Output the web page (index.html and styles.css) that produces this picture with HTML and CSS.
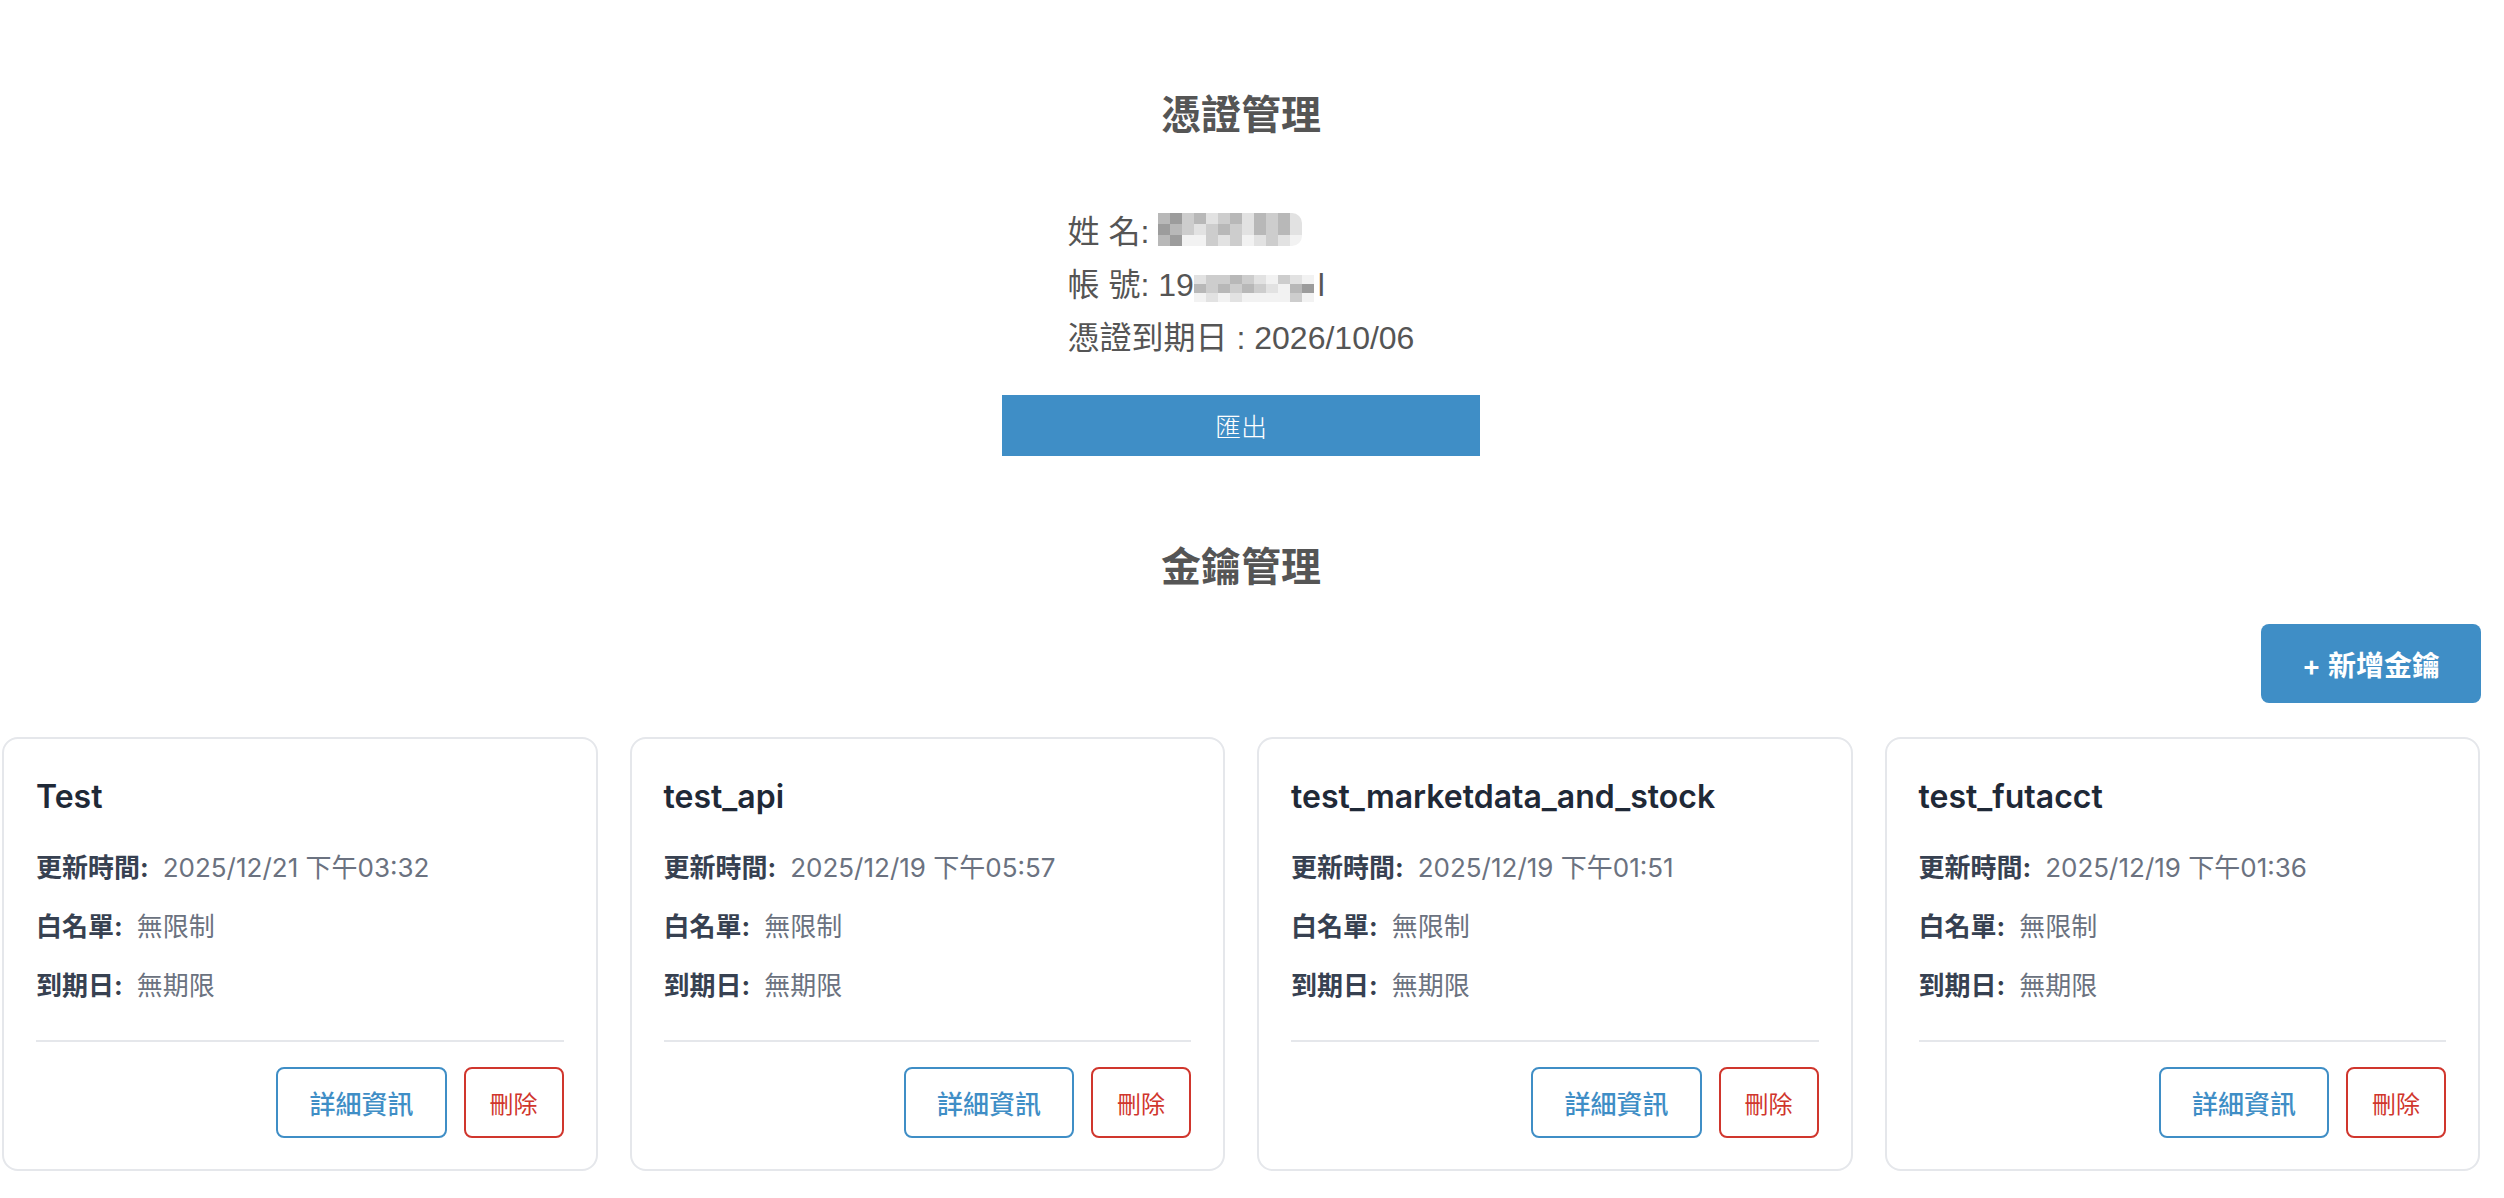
FILE: index.html
```html
<!DOCTYPE html>
<html lang="zh-Hant">
<head>
<meta charset="utf-8">
<title>憑證管理</title>
<link rel="stylesheet" href="styles.css">
</head>
<body>
<div class="page">
  <section class="cert">
    <h2 class="section-title cert-title">憑證管理</h2>
    <div class="info">
      <div class="info-line"><span>姓 名: </span><span class="mosaic name-mosaic"><i class="c2"></i><i class="c1"></i><i class="c3"></i><i class="c2"></i><i class="c4"></i><i class="c3"></i><i class="c2"></i><i class="c4"></i><i class="c2"></i><i class="c3"></i><i class="c2"></i><i class="c4"></i><i class="c1"></i><i class="c2"></i><i class="c3"></i><i class="c4"></i><i class="c3"></i><i class="c2"></i><i class="c3"></i><i class="c4"></i><i class="c2"></i><i class="c3"></i><i class="c2"></i><i class="c4"></i><i class="c2"></i><i class="c1"></i><i class="c5"></i><i class="c5"></i><i class="c3"></i><i class="c4"></i><i class="c3"></i><i class="c5"></i><i class="c4"></i><i class="c3"></i><i class="c4"></i><i class="c5"></i></span></div>
      <div class="info-line"><span>帳 號: 19</span><span class="mosaic acct-mosaic"><i class="c4"></i><i class="c3"></i><i class="c3"></i><i class="c2"></i><i class="c3"></i><i class="c4"></i><i class="c5"></i><i class="c3"></i><i class="c4"></i><i class="c5"></i><i class="c2"></i><i class="c3"></i><i class="c2"></i><i class="c3"></i><i class="c2"></i><i class="c3"></i><i class="c4"></i><i class="c5"></i><i class="c2"></i><i class="c1"></i><i class="c5"></i><i class="c4"></i><i class="c5"></i><i class="c4"></i><i class="c5"></i><i class="c5"></i><i class="c5"></i><i class="c5"></i><i class="c3"></i><i class="c5"></i></span><span>l</span></div>
      <div class="info-line"><span>憑證到期日 : 2026/10/06</span></div>
    </div>
    <button class="export-btn">匯出</button>
  </section>

  <section class="keys">
    <h2 class="section-title keys-title">金鑰管理</h2>
    <div class="toolbar">
      <button class="add-btn">+ 新增金鑰</button>
    </div>
    <div class="card-grid">
      <div class="card">
        <div class="card-title">Test</div>
        <div class="row"><span class="label">更新時間:</span><span class="value">2025/12/21 下午03:32</span></div>
        <div class="row"><span class="label">白名單:</span><span class="value">無限制</span></div>
        <div class="row"><span class="label">到期日:</span><span class="value">無期限</span></div>
        <div class="card-actions">
          <button class="btn-detail">詳細資訊</button>
          <button class="btn-delete">刪除</button>
        </div>
      </div>
      <div class="card">
        <div class="card-title">test_api</div>
        <div class="row"><span class="label">更新時間:</span><span class="value">2025/12/19 下午05:57</span></div>
        <div class="row"><span class="label">白名單:</span><span class="value">無限制</span></div>
        <div class="row"><span class="label">到期日:</span><span class="value">無期限</span></div>
        <div class="card-actions">
          <button class="btn-detail">詳細資訊</button>
          <button class="btn-delete">刪除</button>
        </div>
      </div>
      <div class="card">
        <div class="card-title">test_marketdata_and_stock</div>
        <div class="row"><span class="label">更新時間:</span><span class="value">2025/12/19 下午01:51</span></div>
        <div class="row"><span class="label">白名單:</span><span class="value">無限制</span></div>
        <div class="row"><span class="label">到期日:</span><span class="value">無期限</span></div>
        <div class="card-actions">
          <button class="btn-detail">詳細資訊</button>
          <button class="btn-delete">刪除</button>
        </div>
      </div>
      <div class="card">
        <div class="card-title">test_futacct</div>
        <div class="row"><span class="label">更新時間:</span><span class="value">2025/12/19 下午01:36</span></div>
        <div class="row"><span class="label">白名單:</span><span class="value">無限制</span></div>
        <div class="row"><span class="label">到期日:</span><span class="value">無期限</span></div>
        <div class="card-actions">
          <button class="btn-detail">詳細資訊</button>
          <button class="btn-delete">刪除</button>
        </div>
      </div>
    </div>
  </section>
</div>
</body>
</html>
```

FILE: styles.css
```css
html, body {
  margin: 0;
  padding: 0;
  background: #ffffff;
}

body {
  font-family: "Liberation Sans", "Noto Sans CJK TC", sans-serif;
  color: #555555;
}

.page {
  width: 2482px;
  padding: 0 2px;
  box-sizing: border-box;
  display: flex;
  flex-direction: column;
}

.cert {
  display: flex;
  flex-direction: column;
  align-items: center;
}

.section-title {
  margin: 0;
  font-family: "Noto Sans CJK TC", sans-serif;
  font-size: 40px;
  line-height: 60px;
  font-weight: 700;
  color: #555555;
  text-align: center;
}

.cert-title {
  margin-top: 82px;
}

.info {
  margin-top: 64px;
  display: flex;
  flex-direction: column;
  align-items: flex-start;
  font-size: 32px;
  line-height: 53px;
  color: #555555;
}

.info-line {
  display: flex;
  align-items: center;
  height: 53px;
  white-space: pre;
}

.mosaic {
  display: grid;
  grid-auto-rows: 11px;
  margin-top: -7px;
}

.mosaic i {
  display: block;
}

.name-mosaic {
  grid-template-columns: repeat(12, 12px);
  border-radius: 0 10px 10px 0;
  overflow: hidden;
}

.acct-mosaic {
  grid-template-columns: repeat(10, 12px);
  margin-top: 6px;
  grid-auto-rows: 9px;
  margin-right: 4px;
}

.c1 { background: #9c9c9c; }
.c2 { background: #b8b8b8; }
.c3 { background: #cdcdcd; }
.c4 { background: #e2e2e2; }
.c5 { background: #f2f2f2; }

.export-btn {
  margin-top: 30px;
  width: 478px;
  height: 61px;
  border: none;
  border-radius: 0;
  background: #3f8ec6;
  color: #ffffff;
  font-family: "Noto Sans CJK TC", sans-serif;
  font-size: 26px;
  font-weight: 300;
  padding: 0;
}

.keys {
  display: flex;
  flex-direction: column;
}

.keys-title {
  margin-top: 78px;
}

.toolbar {
  margin-top: 30px;
  display: flex;
  justify-content: flex-end;
}

.add-btn {
  height: 79px;
  padding: 0 41px;
  border: none;
  border-radius: 8px;
  background: #3f8ec6;
  color: #ffffff;
  font-family: "Inter", "Noto Sans CJK TC", sans-serif;
  font-size: 28px;
  font-weight: 600;
  margin-right: -1px;
}

.card-grid {
  margin-top: 34px;
  display: grid;
  grid-template-columns: repeat(4, 1fr);
  gap: 32px;
}

.card {
  border: 2px solid #e5e7eb;
  border-radius: 16px;
  padding: 32px 32px 31px 32px;
  display: flex;
  flex-direction: column;
  font-family: "Inter", "Noto Sans CJK TC", sans-serif;
}

.card-title {
  font-size: 32px;
  line-height: 52px;
  font-weight: 600;
  color: #1f2937;
  margin-bottom: 5px;
}

.row {
  margin-top: 20px;
  font-size: 26px;
  line-height: 39px;
  display: flex;
}

.label {
  font-weight: 700;
  color: #374151;
  margin-right: 14px;
}

.value {
  color: #6b7280;
}

.card-actions {
  margin-top: 35px;
  border-top: 2px solid #e5e7eb;
  padding-top: 25px;
  display: flex;
  justify-content: flex-end;
  gap: 17px;
}

.card-actions button {
  height: 71px;
  background: #ffffff;
  border-radius: 8px;
  font-family: "Noto Sans CJK TC", sans-serif;
}

.btn-detail {
  border: 2px solid #3f8ec6;
  color: #3f8ec6;
  font-size: 26px;
  font-weight: 500;
  padding: 0 31px;
}

.btn-delete {
  border: 2px solid #d0362d;
  color: #d0362d;
  font-size: 24px;
  font-weight: 400;
  padding: 0 24px;
}
```
